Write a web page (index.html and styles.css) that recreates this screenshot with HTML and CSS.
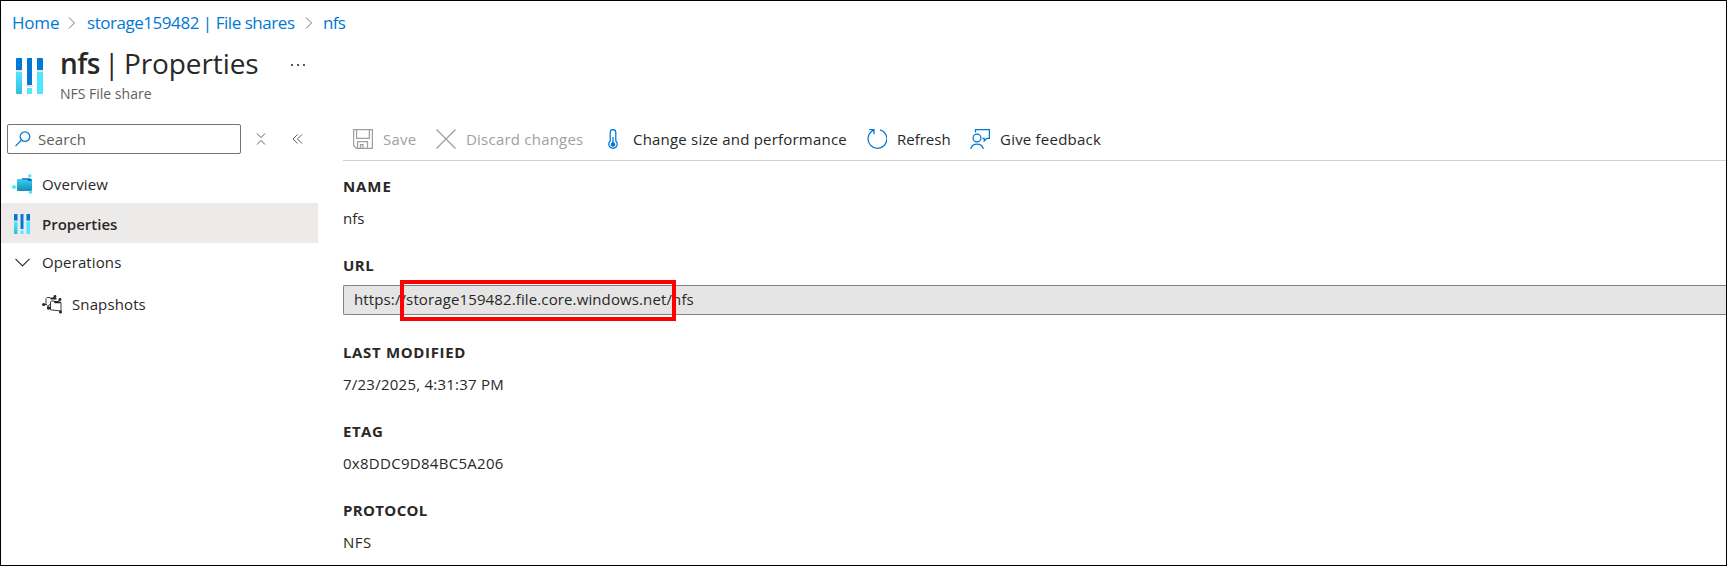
FILE: index.html
```html
<!DOCTYPE html>
<html lang="en">
<head>
<meta charset="utf-8">
<title>nfs | Properties</title>
<link rel="stylesheet" href="styles.css">
</head>
<body>
<svg width="0" height="0" class="defs">
  <defs>
    <linearGradient id="cyan" x1="0" y1="0" x2="0" y2="1"><stop offset="0" stop-color="#50e6ff"/><stop offset="1" stop-color="#32bedd"/></linearGradient>
    <linearGradient id="teal" x1="0" y1="0" x2="0" y2="1"><stop offset="0" stop-color="#32d4f5"/><stop offset="1" stop-color="#198ab3"/></linearGradient>
    <symbol id="share" viewBox="0 0 27 36">
      <path fill="#0078d4" d="M0 1q0-1 1-1h5v12H0zM11 1q0-1 1-1h4v27h-5zM21 0h5q1 0 1 1v11h-6z"/>
      <path fill="#e4e4e4" d="M0 12h6v2H0zM10 27h7v2h-7zM20.500 12H27v2h-6.500z"/>
      <path fill="url(#cyan)" d="M0 14h6v22H1q-1 0-1-1z"/>
      <path fill="#50e6ff" d="M11 30h5v5q0 1-1 1h-4zM21 14h6v21q0 1-1 1h-5z"/>
    </symbol>
  </defs>
</svg>
<div class="window">
  <nav class="crumbs">
    <a class="home">Home</a>
    <svg class="sep" viewBox="0 0 8 12"><path d="M1 .5 6.500 6 1 11.500"/></svg>
    <a class="account">storage159482 | File shares</a>
    <svg class="sep" viewBox="0 0 8 12"><path d="M1 .5 6.500 6 1 11.500"/></svg>
    <a class="leaf">nfs</a>
  </nav>
  <header class="head">
    <svg class="head-icon"><use href="#share"/></svg>
    <div>
      <h1><b>nfs</b><span class="bar">|</span><span class="page">Properties</span><span class="more"><i></i><i></i><i></i></span></h1>
      <p><span>NFS File share</span></p>
    </div>
  </header>
  <div class="body">
    <aside class="side">
      <div class="search-row">
        <div class="search">
          <svg width="16" height="16" viewBox="0 0 16 16"><g fill="none" stroke="#0078d4" stroke-width="1.200"><circle cx="10" cy="5.600" r="4.800"/><path d="M6.500 9 .5 15.200"/></g></svg>
          <span>Search</span>
        </div>
        <svg class="tool collapse" width="10" height="12" viewBox="0 0 10 12"><path d="M1 .5 5 4.500 9 .5M1 11.500 5 7.500 9 11.500"/></svg>
        <svg class="tool" width="11" height="10" viewBox="0 0 11 10"><path d="M5.500 .5 1 5 5.500 9.500M10 .5 5.500 5 10 9.500"/></svg>
      </div>
      <div class="item overview">
        <svg width="20" height="20" viewBox="0 0 20 20"><path d="M2 13H6M16 2 18 5M16 16 18 18" stroke="#9cebff"/><path fill="url(#teal)" d="M5 6q0-1 1-1h13q1 0 1 1v10q0 1-1 1H6q-1 0-1-1z"/><path fill="#0f5fa8" d="M10 4.200h6l3.500 .8v2h-2.500l-2-1.500h-5z"/><g fill="#50e6ff"><circle cx="2" cy="13" r="2"/><circle cx="17.800" cy="1.800" r="1.700"/><circle cx="18.500" cy="18.300" r="1.700"/></g></svg>
        <span>Overview</span>
      </div>
      <div class="item selected"><svg class="mini" width="16" height="20" viewBox="0 0 27 36" preserveAspectRatio="none"><use href="#share" width="27" height="36"/></svg><span>Properties</span></div>
      <div class="item group"><svg width="15" height="9" viewBox="0 0 15 9"><path d="M.5 .8 7.500 7.800 14.500 .8" fill="none" stroke="#323130" stroke-width="1.200"/></svg><span>Operations</span></div>
      <div class="item child">
        <svg width="20" height="19" viewBox="0 0 20 19"><g fill="none" stroke="#242424" stroke-width=".9"><path d="M1.500 9.500H4M4 10V3.500L5 2.500H8L9 3.500H14M4 9.800H5M8.500 13V7L9.500 6H12L13 7.500H19V16L8.500 14.800V13H6.500M10 3.500 13 1.500M15 7 18 4.500M5 11.500 8.500 9"/></g><g fill="#242424"><path d="M8.500 2.500 14.500 3v1.500h-6zM12 5.800 18.500 6.500v1.700h-6z"/><circle cx="1.700" cy="9.500" r="1.600"/><circle cx="13" cy="1.500" r="1.400"/><circle cx="6.500" cy="13" r="1.700"/><circle cx="18" cy="4.500" r="1.400"/><circle cx="18.500" cy="17" r="1.500"/></g></svg>
        <span>Snapshots</span>
      </div>
    </aside>
    <main class="main">
      <div class="toolbar">
        <span class="cmd off save"><svg width="20" height="20" viewBox="0 0 20 20"><path d="M.6 .6H19.400V19.400H3.500L.6 16.500ZM3.600 .6V9.400H16.400V.6M4.600 19V12.500H14.500V19M7.500 19V15.500H10V19"/></svg><span>Save</span></span>
        <span class="cmd off discard"><svg width="20" height="20" viewBox="0 0 20 20"><path d="M.5 .5 19.500 19.500M19.500 .5 .5 19.500"/></svg><span>Discard changes</span></span>
        <span class="cmd size"><svg width="10" height="20" viewBox="0 0 10 20"><path d="M2.200 12V3.300a2.800 2.800 0 0 1 5.600 0V12a4.200 4.200 0 1 1-5.600 0Z"/><path d="M5 8v7"/><circle cx="5" cy="15.500" r="2.300" class="solid"/></svg><span>Change size and performance</span></span>
        <span class="cmd refresh"><svg width="20" height="20" viewBox="0 0 20 20"><path d="M13 .8A9.400 9.400 0 1 1 6.800 1.200M2.300 .6H7V5.300"/></svg><span>Refresh</span></span>
        <span class="cmd feedback"><svg width="20" height="20" viewBox="0 0 20 20"><path d="M5.500 3.500V.6H19.400V9.400H17L14.200 12V9.400H12.500"/><circle cx="7" cy="9" r="3.900"/><path d="M.7 20a6.500 6.500 0 0 1 12.600 0"/></svg><span>Give feedback</span></span>
      </div>
      <dl class="fields">
        <dt><span class="t-name">NAME</span></dt><dd><span>nfs</span></dd>
        <dt><span class="t-url">URL</span></dt>
        <dd class="url"><span>https://storage159482.file.core.windows.net/nfs</span><i class="mark"></i></dd>
        <dt><span class="t-mod">LAST MODIFIED</span></dt><dd><span class="v-mod">7/23/2025, 4:31:37 PM</span></dd>
        <dt><span class="t-etag">ETAG</span></dt><dd><span class="v-etag">0x8DDC9D84BC5A206</span></dd>
        <dt><span class="t-prot">PROTOCOL</span></dt><dd><span class="v-prot">NFS</span></dd>
      </dl>
    </main>
  </div>
</div>
</body>
</html>
```
FILE: styles.css
```css
* { box-sizing: border-box; }
body { margin: 0; font: 15px/20px "Segoe UI", "Open Sans", sans-serif; color: #292827; background: #fff; }
.defs { position: absolute; }
.window { width: 1727px; height: 566px; border: 1px solid #000; overflow: hidden; }
span, a, b { white-space: nowrap; }
svg { flex: none; display: block; }

.crumbs { display: flex; align-items: center; height: 44px; padding-left: 11px; font-size: 17px; color: #0078d4; }
.crumbs a { flex: none; }
.sep { width: 8px; height: 12px; fill: none; stroke: #767676; }
.home { width: 56px; letter-spacing: -0.2px; }
.account { width: 218px; margin-left: 11px; letter-spacing: -0.46px; }
.leaf { margin-left: 10px; letter-spacing: -0.7px; }

.head { display: flex; height: 66px; padding-left: 15px; }
.head-icon { width: 27px; height: 36px; margin: 13px 17px 0 0; }
h1 { display: flex; margin: 0; font-size: 28px; line-height: 36px; font-weight: 400; }
h1 b { width: 44px; font-weight: 600; letter-spacing: -0.6px; }
.bar { width: 20px; }
.page { width: 167px; letter-spacing: -0.1px; }
.more { display: flex; gap: 4px; padding-top: 19px; }
.more i { width: 2px; height: 2px; background: #555; }
.head p { margin: 3px 0 0; font-size: 14px; color: #605e5c; }

.body { display: flex; }
.side { width: 317px; margin-right: 25px; flex: none; }
.search-row { display: flex; align-items: center; height: 53px; padding: 0 0 4px 6px; }
.search { display: flex; align-items: center; gap: 7px; width: 234px; height: 30px; margin-top: 6px; padding-left: 7px; border: 1px solid #767472; border-radius: 2px; color: #605e5c; letter-spacing: 0.1px; }
.tool { fill: none; stroke: #605e5c; margin: 6px 0 0 26px; }
.tool.collapse { margin-left: 15px; }
.item { display: flex; align-items: center; height: 40px; padding-left: 11px; letter-spacing: 0.12px; }
.overview { height: 39px; }
.item svg + span { margin-left: 10px; }
.selected { background: #edebe9; font-weight: 600; padding: 2px 0 0 13px; letter-spacing: 0; }
.selected svg + span { margin-left: 12px; }
.group { height: 38px; padding-left: 14px; }
.group svg + span { margin-left: 12px; }
.child { height: 46px; padding-left: 41px; }

.main { flex: 1; min-width: 0; }
.toolbar { display: flex; height: 50px; padding-top: 6px; border-bottom: 1px solid #d2d0ce; }
.cmd { display: flex; align-items: center; flex: none; }
.cmd svg { fill: none; stroke: #0078d4; stroke-width: 1.25; }
.cmd svg .solid { fill: #0078d4; stroke: none; }
.off { color: #a19f9d; }
.cmd.off svg { stroke: #a19f9d; }
.cmd svg + span { margin-left: 10px; }
.save { margin-left: 10px; width: 83px; letter-spacing: 0.25px; }
.discard { width: 172px; letter-spacing: 0.22px; }
.size { width: 259px; letter-spacing: 0.2px; }
.size svg + span { margin-left: 15px; }
.refresh { width: 103px; }
.feedback { letter-spacing: 0.22px; }

.fields { margin: 0; padding-top: 12px; }
dt { height: 28px; font-weight: 700; line-height: 26px; }
dd { height: 51px; margin: 0; line-height: 34px; }
dd.url { position: relative; height: 30px; margin: 5px 0 24px; padding-left: 10px; line-height: 27px; letter-spacing: 0.12px; background: #e5e5e5; border: 1px solid #858381; border-right: 0; border-radius: 2px 0 0 2px; }
.mark { position: absolute; left: 56px; top: -6px; width: 276px; height: 41px; border: 4px solid #f00; }
.t-name { letter-spacing: 0.9px; }
.t-url { letter-spacing: 0.5px; }
.t-mod { letter-spacing: 0.65px; }
.t-etag { letter-spacing: 0.5px; }
.t-prot { letter-spacing: 0.35px; }
.v-mod { letter-spacing: 0.24px; }
.v-etag { letter-spacing: 0.29px; }
.v-prot { letter-spacing: 0.5px; }
```
